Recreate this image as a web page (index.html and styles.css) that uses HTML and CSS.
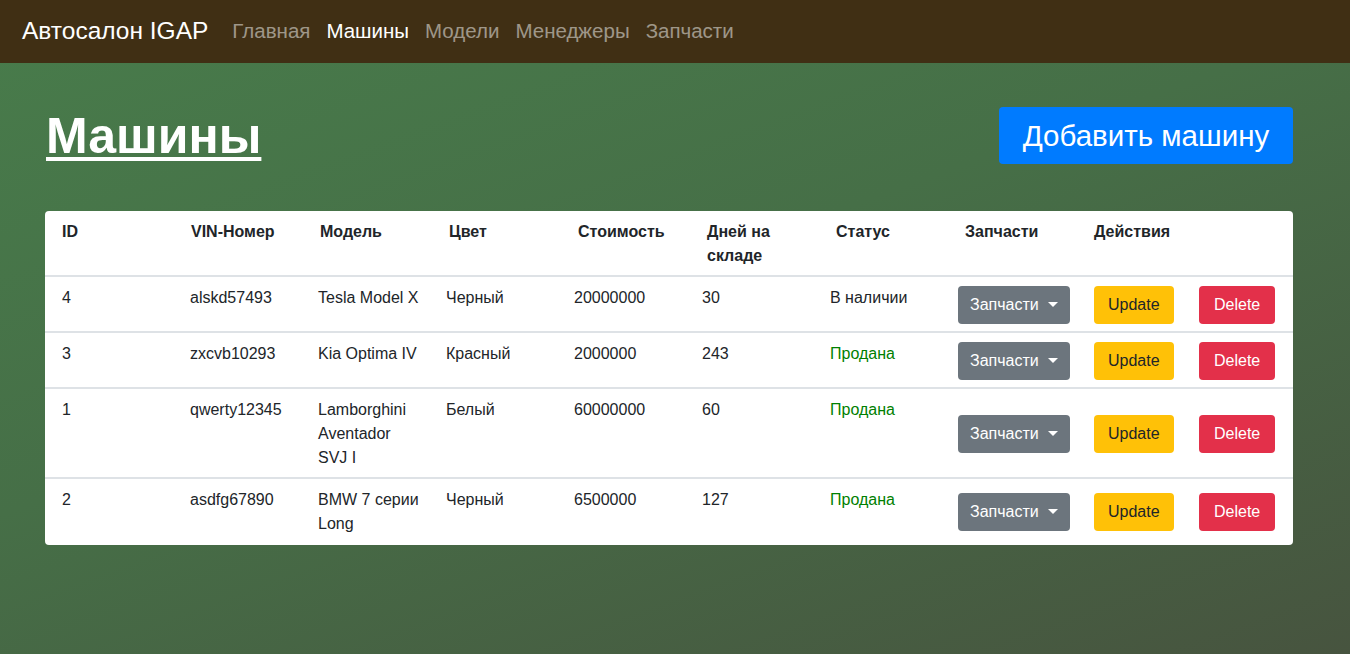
FILE: index.html
```html
<!DOCTYPE html>
<html lang="ru">
<head>
<meta charset="utf-8">
<title>Машины</title>
<link rel="stylesheet" href="styles.css">
</head>
<body>
<nav class="navbar">
  <a class="brand" href="#">Автосалон IGAP</a>
  <ul class="nav">
    <li><a class="nav-link" href="#">Главная</a></li>
    <li><a class="nav-link active" href="#">Машины</a></li>
    <li><a class="nav-link" href="#">Модели</a></li>
    <li><a class="nav-link" href="#">Менеджеры</a></li>
    <li><a class="nav-link" href="#">Запчасти</a></li>
  </ul>
</nav>
<main class="page">
  <div class="head">
    <h1 class="title">Машины</h1>
    <button class="btn btn-primary btn-big">Добавить машину</button>
  </div>
  <div class="card">
    <div class="thead">
      <div>ID</div>
      <div>VIN-Номер</div>
      <div>Модель</div>
      <div>Цвет</div>
      <div>Стоимость</div>
      <div>Дней на складе</div>
      <div>Статус</div>
      <div>Запчасти</div>
      <div>Действия</div>
    </div>
    <div class="row">
      <div class="cell">4</div>
      <div class="cell">alskd57493</div>
      <div class="cell">Tesla Model X</div>
      <div class="cell">Черный</div>
      <div class="cell">20000000</div>
      <div class="cell">30</div>
      <div class="cell">В наличии</div>
      <div class="cell mid"><button class="btn btn-secondary">Запчасти<span class="caret"></span></button></div>
      <div class="cell mid"><button class="btn btn-warning">Update</button></div>
      <div class="cell mid"><button class="btn btn-danger">Delete</button></div>
    </div>
    <div class="row">
      <div class="cell">3</div>
      <div class="cell">zxcvb10293</div>
      <div class="cell">Kia Optima IV</div>
      <div class="cell">Красный</div>
      <div class="cell">2000000</div>
      <div class="cell">243</div>
      <div class="cell sold">Продана</div>
      <div class="cell mid"><button class="btn btn-secondary">Запчасти<span class="caret"></span></button></div>
      <div class="cell mid"><button class="btn btn-warning">Update</button></div>
      <div class="cell mid"><button class="btn btn-danger">Delete</button></div>
    </div>
    <div class="row">
      <div class="cell">1</div>
      <div class="cell">qwerty12345</div>
      <div class="cell">Lamborghini Aventador SVJ I</div>
      <div class="cell">Белый</div>
      <div class="cell">60000000</div>
      <div class="cell">60</div>
      <div class="cell sold">Продана</div>
      <div class="cell mid"><button class="btn btn-secondary">Запчасти<span class="caret"></span></button></div>
      <div class="cell mid"><button class="btn btn-warning">Update</button></div>
      <div class="cell mid"><button class="btn btn-danger">Delete</button></div>
    </div>
    <div class="row last">
      <div class="cell">2</div>
      <div class="cell">asdfg67890</div>
      <div class="cell">BMW 7 серии Long</div>
      <div class="cell">Черный</div>
      <div class="cell">6500000</div>
      <div class="cell">127</div>
      <div class="cell sold">Продана</div>
      <div class="cell mid"><button class="btn btn-secondary">Запчасти<span class="caret"></span></button></div>
      <div class="cell mid"><button class="btn btn-warning">Update</button></div>
      <div class="cell mid"><button class="btn btn-danger">Delete</button></div>
    </div>
  </div>
</main>
</body>
</html>
```

FILE: styles.css
```css
* { box-sizing: border-box; }
html, body { margin: 0; height: 100%; }
body {
  font-family: "Liberation Sans", Arial, sans-serif;
  font-size: 16px;
  line-height: 24px;
  color: #212529;
  background: linear-gradient(160deg, #487c4b 0%, #466f47 45%, #47543f 100%);
  min-height: 654px;
}
.navbar {
  height: 63px;
  background: #402f14;
  display: flex;
  align-items: center;
  padding: 0 22px;
}
.brand {
  color: #fff;
  text-decoration: none;
  font-size: 24.5px;
  margin-right: 16px;
  line-height: 30px;
  padding-bottom: 2px;
}
.nav {
  list-style: none;
  margin: 0;
  padding: 0;
  display: flex;
}
.nav-link {
  display: block;
  padding: 0 8px;
  color: rgba(255,255,255,0.5);
  text-decoration: none;
  font-size: 20.5px;
  line-height: 24px;
  padding-bottom: 2px;
}
.nav-link.active { color: #fff; }
.page {
  padding: 34px 57px 0 45px;
}
.head {
  display: flex;
  justify-content: space-between;
  align-items: center;
  height: 76px;
  margin-bottom: 38px;
}
.title {
  margin: 2px 0 0 1px;
  font-size: 50px;
  line-height: 58px;
  font-weight: 700;
  color: #fff;
  text-decoration: underline;
  text-decoration-thickness: 4px;
  text-underline-offset: 4px;
}
.btn {
  font-family: inherit;
  font-size: 16px;
  line-height: 24px;
  border: 0;
  border-radius: 4px;
  padding: 7px 12px;
  cursor: pointer;
  display: inline-flex;
  align-items: center;
}
.btn-big {
  font-size: 29.5px;
  line-height: 33px;
  padding: 12px 20px;
  height: 57px;
  width: 294px;
  justify-content: center;
}
.btn-primary { background: #007bff; color: #fff; }
.btn-secondary { background: #6c757d; color: #fff; }
.btn-warning { background: #ffc107; color: #212529; padding: 7px 14px; }
.btn-danger { background: #e3304a; color: #fff; padding: 7px 15px; }
.caret {
  display: inline-block;
  margin-left: 9px;
  width: 0;
  height: 0;
  border-left: 5px solid transparent;
  border-right: 5px solid transparent;
  border-top: 5px solid #fff;
  margin-top: -2px;
}
.card {
  background: #fff;
  border-radius: 4px;
  width: 1248px;
  overflow: hidden;
}
.thead {
  display: grid;
  grid-template-columns: repeat(9, 129px) 1fr;
  padding: 9px 0 7px 17px;
  font-weight: 700;
  border-bottom: 2px solid #dee2e6;
}
.thead > div:nth-child(6) { padding-right: 40px; }
.row {
  display: grid;
  grid-template-columns: 128px 128px 128px 128px 128px 128px 128px 136px 105px 1fr;
  padding: 0 19px 0 17px;
  border-bottom: 2px solid #dee2e6;
}
.row.last { border-bottom: 0; }
.row.last .cell { padding-bottom: 9px; }
.cell {
  padding: 9px 10px 7px 0;
  align-self: start;
}
.cell:nth-child(3) { padding-right: 24px; }
.cell.mid {
  align-self: center;
  padding: 9px 0 7px;
}
.row.last .cell.mid { padding: 9px 0; }
.sold { color: #008000; }
```
